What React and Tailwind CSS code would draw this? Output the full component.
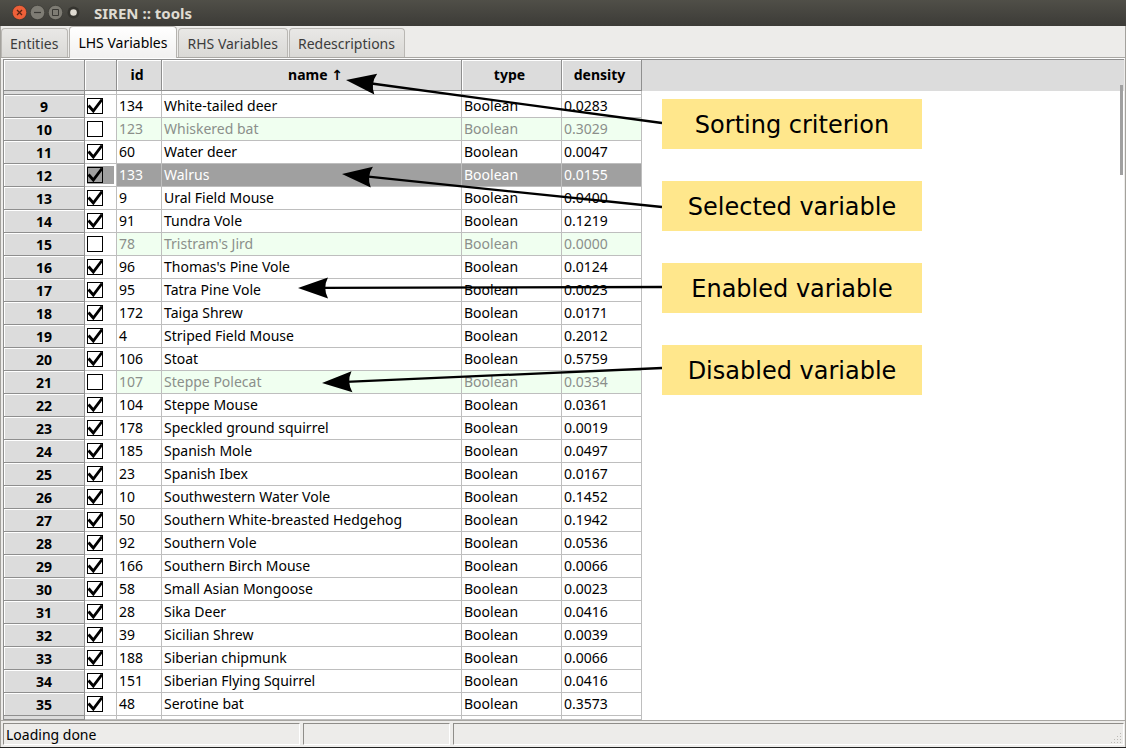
import React from 'react';

const rows = [
  [9, 134, 'White-tailed deer', '0.0283'],
  [10, 123, 'Whiskered bat', '0.3029', 'off'],
  [11, 60, 'Water deer', '0.0047'],
  [12, 133, 'Walrus', '0.0155', 'sel'],
  [13, 9, 'Ural Field Mouse', '0.0400'],
  [14, 91, 'Tundra Vole', '0.1219'],
  [15, 78, "Tristram's Jird", '0.0000', 'off'],
  [16, 96, "Thomas's Pine Vole", '0.0124'],
  [17, 95, 'Tatra Pine Vole', '0.0023'],
  [18, 172, 'Taiga Shrew', '0.0171'],
  [19, 4, 'Striped Field Mouse', '0.2012'],
  [20, 106, 'Stoat', '0.5759'],
  [21, 107, 'Steppe Polecat', '0.0334', 'off'],
  [22, 104, 'Steppe Mouse', '0.0361'],
  [23, 178, 'Speckled ground squirrel', '0.0019'],
  [24, 185, 'Spanish Mole', '0.0497'],
  [25, 23, 'Spanish Ibex', '0.0167'],
  [26, 10, 'Southwestern Water Vole', '0.1452'],
  [27, 50, 'Southern White-breasted Hedgehog', '0.1942'],
  [28, 92, 'Southern Vole', '0.0536'],
  [29, 166, 'Southern Birch Mouse', '0.0066'],
  [30, 58, 'Small Asian Mongoose', '0.0023'],
  [31, 28, 'Sika Deer', '0.0416'],
  [32, 39, 'Sicilian Shrew', '0.0039'],
  [33, 188, 'Siberian chipmunk', '0.0066'],
  [34, 151, 'Siberian Flying Squirrel', '0.0416'],
  [35, 48, 'Serotine bat', '0.3573'],
];

const tabs = ['Entities', 'LHS Variables', 'RHS Variables', 'Redescriptions'];

const notes = ['Sorting criterion', 'Selected variable', 'Enabled variable', 'Disabled variable'];

// Tip and tail of each arrow, relative to the table panel.
const arrows = [
  [342, 20, 658, 63],
  [338, 114, 658, 147],
  [294, 228, 658, 227],
  [318, 323, 658, 308],
];

function Arrow({ points: [x1, y1, x2, y2] }) {
  const angle = (Math.atan2(y2 - y1, x2 - x1) * 180) / Math.PI;
  const length = Math.hypot(x2 - x1, y2 - y1);
  return (
    <g transform={`translate(${x1} ${y1}) rotate(${angle})`}>
      <path d={`M24 0H${length}`} stroke="#000" strokeWidth="2.3" />
      <path d="M0 0L30 -10.5Q24.500 0 30 10.500Z" />
    </g>
  );
}

function TitleBar() {
  return (
    <header className="flex h-[26px] shrink-0 items-center bg-linear-to-b from-[#504f48] to-[#3c3b37] pb-px pl-3">
      <div className="flex items-center gap-[3px]">
        <button aria-label="Close" className="size-[15px]">
          <svg viewBox="0 0 15 15">
            <circle cx="7.500" cy="7.500" r="7.200" fill="#ee6039" stroke="#33322e" strokeWidth=".6" />
            <path d="M5 5l5 5M10 5l-5 5" stroke="#5b2413" strokeWidth="1.300" />
          </svg>
        </button>
        <button aria-label="Minimize" className="size-[15px]">
          <svg viewBox="0 0 15 15">
            <circle cx="7.500" cy="7.500" r="7.200" fill="#7e7c74" stroke="#33322e" strokeWidth=".6" />
            <path d="M4 7.500h7" stroke="#3a3935" strokeWidth="1.200" />
          </svg>
        </button>
        <button aria-label="Maximize" className="size-[15px]">
          <svg viewBox="0 0 15 15">
            <circle cx="7.500" cy="7.500" r="7.200" fill="#7e7c74" stroke="#33322e" strokeWidth=".6" />
            <path d="M4.500 4.500h6v6h-6z" fill="none" stroke="#3a3935" />
          </svg>
        </button>
        <button aria-label="Window menu" className="size-[15px]">
          <svg viewBox="0 0 15 15">
            <circle cx="7.500" cy="7.500" r="6" fill="#35342f" />
            <circle cx="7.500" cy="7.500" r="3.300" fill="#dfdbd2" />
          </svg>
        </button>
      </div>
      <h1 className="pl-[13px] text-[15px] leading-5 font-bold text-[#dfdbd2]">SIREN :: tools</h1>
    </header>
  );
}

function Tabs() {
  return (
    <div role="tablist" className="flex h-8 shrink-0 items-end gap-px border-b border-[#a9a7a3] shadow-[0_1px_0_#fff]">
      {tabs.map((tab) => (
        <button
          key={tab}
          role="tab"
          aria-selected={tab === 'LHS Variables'}
          className={
            tab === 'LHS Variables'
              ? '-mb-px h-8 rounded-t border border-b-0 border-[#b5b3af] bg-linear-to-b from-white to-[#f2f1f0] pr-[9px] pl-2 text-black'
              : 'h-[29px] rounded-t border border-b-0 border-[#b9b7b3] bg-linear-to-b from-[#e9e8e6] to-[#dad9d6] pt-px pr-[9px] pl-2 text-[#3c3c3c]'
          }
        >
          {tab}
        </button>
      ))}
    </div>
  );
}

function CheckBox({ label, checked, selected }) {
  return (
    <label className={selected ? 'mr-[2px] ml-[2px] flex h-[18px] items-center bg-[#a0a0a0]' : 'ml-[2px] flex'}>
      <span className="relative block size-4">
        <input
          type="checkbox"
          aria-label={label}
          defaultChecked={checked}
          className={
            selected
              ? 'peer block size-4 appearance-none border border-black bg-[#a0a0a0]'
              : 'peer block size-4 appearance-none border border-black bg-white'
          }
        />
        <svg viewBox="0 0 16 16" className="pointer-events-none absolute inset-0 hidden size-4 overflow-visible peer-checked:block">
          <path d="M1.500 7.500L6.300 13L15 1.500" fill="none" stroke="#000" strokeWidth="2.900" />
        </svg>
      </span>
    </label>
  );
}

function cellStyle(state) {
  if (state === 'off') return 'border-r border-b border-[#bebebe] bg-[#f0fff0] pl-[2px] text-[#8b8f8b]';
  if (state === 'sel') return 'border-r border-b border-[#bebebe] bg-[#a0a0a0] pl-[2px] text-white';
  return 'border-r border-b border-[#bebebe] bg-white pl-[2px]';
}

const headBase = 'border-r border-b border-[#8f8f8f] bg-[#dcdcdc] py-0 font-bold shadow-[inset_1px_1px_0_#fff]';
const headStyle = `${headBase} pr-1 pl-0`;
const sortedHeadStyle = `${headBase} pr-0 pl-2`;

function ThinRow() {
  return (
    <tr aria-hidden="true" className="h-1">
      <td className="border-r border-b border-[#8f8f8f] bg-[#dcdcdc] p-0" />
      {[0, 1, 2, 3, 4].map((i) => (
        <td key={i} className="border-r border-b border-[#bebebe] bg-white p-0" />
      ))}
    </tr>
  );
}

function VariableTable() {
  return (
    <table className="w-[638px] table-fixed border-separate border-spacing-0 text-left leading-5">
      <colgroup>
        <col className="w-[81px]" />
        <col className="w-8" />
        <col className="w-[45px]" />
        <col className="w-[300px]" />
        <col className="w-[100px]" />
        <col className="w-20" />
      </colgroup>
      <thead>
        <tr className="h-[31px] text-center">
          <th className={headStyle} />
          <th className={headStyle} />
          <th className={headStyle}>id</th>
          <th className={sortedHeadStyle} aria-sort="ascending">
            name <span className="font-['DejaVu_Sans',sans-serif]">↑</span>
          </th>
          <th className={headStyle}>type</th>
          <th className={headStyle}>density</th>
        </tr>
      </thead>
      <tbody>
        <ThinRow />
        {rows.map(([n, id, name, density, state]) => (
          <tr key={n} className="h-[23px]">
            <th scope="row" className="border-r border-b border-[#8f8f8f] bg-[#dcdcdc] p-0 pt-px text-center font-bold shadow-[inset_1px_1px_0_#fff]">
              {n}
            </th>
            <td className="border-r border-b border-[#bebebe] bg-white p-0">
              <CheckBox label={name} checked={state !== 'off'} selected={state === 'sel'} />
            </td>
            <td className={cellStyle(state)}>{id}</td>
            <td className={cellStyle(state)}>{name}</td>
            <td className={cellStyle(state)}>Boolean</td>
            <td className={cellStyle(state)}>{density}</td>
          </tr>
        ))}
        <ThinRow />
      </tbody>
    </table>
  );
}

export default function App() {
  return (
    <div className="flex h-screen flex-col overflow-hidden border-b border-[#222] bg-[#edecea] font-['Noto_Sans',sans-serif] text-sm text-black">
      <TitleBar />
      <div className="flex min-h-0 flex-1 flex-col border-x border-[#a3a19c]">
        <Tabs />
        <main className="relative mt-px mr-px ml-[2px] min-h-0 flex-1 overflow-hidden border-t border-l border-[#8f8f8f] bg-white">
          <div className="flex">
            <VariableTable />
            <div className="h-[31px] flex-1 bg-[#dcdcdc]" />
          </div>
          <div className="absolute top-[25px] right-px h-[90px] w-[3px] bg-[#a0a0a0]" />
          <svg className="pointer-events-none absolute inset-0 size-full" aria-hidden="true">
            {arrows.map((points) => (
              <Arrow key={points[0]} points={points} />
            ))}
          </svg>
          <div className="absolute top-[39px] left-[658px] flex w-[260px] flex-col gap-8 font-['DejaVu_Sans',sans-serif] text-2xl">
            {notes.map((note) => (
              <p key={note} className="flex h-[50px] items-center justify-center bg-[#ffe78c] pt-[2px]">
                {note}
              </p>
            ))}
          </div>
        </main>
        <footer className="flex h-[27px] shrink-0 gap-[3px] border-t border-[#a9a7a3] pt-[2px] pr-px pb-[2px] pl-[2px]">
          <p className="w-[297px] border-t border-l border-[#8f8d89] border-r border-b border-r-white border-b-white pl-[2px] leading-[22px]">Loading done</p>
          <p className="w-[147px] border-t border-l border-[#8f8d89] border-r border-b border-r-white border-b-white" />
          <div className="flex flex-1 items-end justify-end border-t border-l border-[#8f8d89] border-r border-b border-r-white border-b-white">
            <svg className="size-3" viewBox="0 0 12 12" fill="#bcbab6" aria-hidden="true">
              <path d="M9 1h1v1h-1zM9 4h1v1h-1zM6 4h1v1h-1zM9 7h1v1h-1zM6 7h1v1h-1zM3 7h1v1h-1zM9 10h1v1h-1zM6 10h1v1h-1zM3 10h1v1h-1zM0 10h1v1h-1z" />
            </svg>
          </div>
        </footer>
      </div>
    </div>
  );
}
